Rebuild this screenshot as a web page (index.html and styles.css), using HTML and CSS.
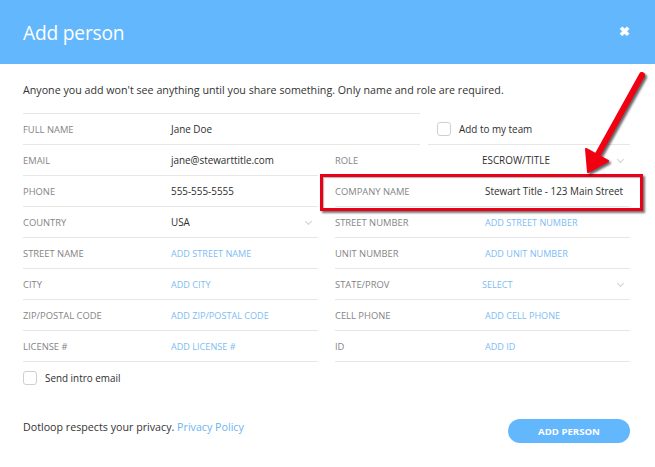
FILE: index.html
```html
<!DOCTYPE html>
<html>
<head>
<meta charset="utf-8">
<link rel="stylesheet" href="styles.css">
</head>
<body>
<div class="modal">
  <header class="head">
    <h1 class="title">Add person</h1>
    <span class="close">&#x2716;</span>
  </header>
  <div class="content">
    <p class="intro">Anyone you add won't see anything until you share something. Only name and role are required.</p>
    <div class="toprow">
      <div class="row fullname">
        <span class="label">FULL NAME</span>
        <span class="value">Jane Doe</span>
      </div>
      <div class="row team">
        <span class="box"></span>
        <span class="value">Add to my team</span>
      </div>
    </div>
    <div class="grid">
      <div class="col">
        <div class="row"><span class="label">EMAIL</span><span class="value">jane@stewarttitle.com</span></div>
        <div class="row"><span class="label">PHONE</span><span class="value">555-555-5555</span></div>
        <div class="row"><span class="label">COUNTRY</span><span class="value">USA</span><span class="chev"></span></div>
        <div class="row"><span class="label">STREET NAME</span><span class="link">ADD STREET NAME</span></div>
        <div class="row"><span class="label">CITY</span><span class="link">ADD CITY</span></div>
        <div class="row"><span class="label">ZIP/POSTAL CODE</span><span class="link">ADD ZIP/POSTAL CODE</span></div>
        <div class="row"><span class="label">LICENSE #</span><span class="link">ADD LICENSE #</span></div>
      </div>
      <div class="col right">
        <div class="row"><span class="label">ROLE</span><span class="value sel">ESCROW/TITLE</span><span class="chev"></span></div>
        <div class="row company"><span class="label">COMPANY NAME</span><span class="value">Stewart Title - 123 Main Street</span><span class="highlight"></span></div>
        <div class="row"><span class="label">STREET NUMBER</span><span class="link">ADD STREET NUMBER</span></div>
        <div class="row"><span class="label">UNIT NUMBER</span><span class="link">ADD UNIT NUMBER</span></div>
        <div class="row"><span class="label">STATE/PROV</span><span class="link sel">SELECT</span><span class="chev"></span></div>
        <div class="row"><span class="label">CELL PHONE</span><span class="link">ADD CELL PHONE</span></div>
        <div class="row"><span class="label">ID</span><span class="link">ADD ID</span></div>
      </div>
    </div>
    <div class="intro-mail">
      <span class="box"></span>
      <span class="value">Send intro email</span>
    </div>
    <footer class="foot">
      <span class="privacy">Dotloop respects your privacy. <span class="plink">Privacy Policy</span></span>
      <span class="btn">ADD PERSON</span>
    </footer>
  </div>
  <svg class="arrow" width="70" height="110" viewBox="580 70 70 110">
    <line x1="642" y1="75" x2="597" y2="156" stroke="#f00010" stroke-width="6" stroke-linecap="round"/>
    <polygon points="588,172 586,149 608,161" fill="#f00010" stroke="#f00010" stroke-width="2" stroke-linejoin="round"/>
  </svg>
</div>
</body>
</html>
```
FILE: styles.css
```css
* { box-sizing: border-box; }
html, body { margin: 0; padding: 0; background: #fff; }
body { font-family: "Open Sans", "Noto Sans", sans-serif; color: #333; }
.modal { position: relative; width: 655px; height: 467px; background: #fff; }
.head {
  height: 64px;
  background: #62b7fd;
  display: flex;
  align-items: center;
  justify-content: space-between;
  padding: 0 23px 0 23px;
}
.title { margin: 0; font-size: 19.2px; font-weight: 400; color: #fff; letter-spacing: -0.2px; }
.close { color: #fff; font-size: 13px; font-weight: 700; margin-right: 2px; margin-top: -2px; }
.content { padding: 0 25px 0 23px; }
.intro { margin: 0; padding-top: 18px; padding-bottom: 15px; font-size: 10.7px; line-height: 16px; color: #333; }
.toprow { display: flex; gap: 8px; }
.row {
  height: 31px;
  display: flex;
  align-items: center;
  border-bottom: 1px solid #e7e7e7;
  position: relative;
}
.fullname { width: 397px; border-top: 1px solid #e7e7e7; height: 32px; }
.team { flex: 1; padding-left: 9px; margin-top: 1px; }
.label { width: 148px; flex: none; font-size: 9.4px; color: #848484; }
.right .label { width: 150px; }
.value { font-size: 9.9px; color: #2e2e2e; white-space: nowrap; }
.link { font-size: 9.1px; color: #7dbcf3; white-space: nowrap; }
.sel { margin-left: -3px; }
.grid { display: grid; grid-template-columns: 295px 295px; column-gap: 17px; }
.chev {
  position: absolute; right: 7px; top: 12px;
  width: 5px; height: 5px;
  border-right: 1px solid #d0d0d0; border-bottom: 1px solid #d0d0d0;
  transform: rotate(45deg);
}
.box {
  width: 14px; height: 14px; flex: none;
  border: 1px solid #cfcfcf; border-radius: 3px;
  margin-right: 8px; background: #fff;
}
.highlight {
  position: absolute; left: -15px; right: -13px; top: -2px; bottom: -5px;
  border: 3px solid #ea0019;
  box-shadow: 2px 2px 2px rgba(0,0,0,0.55), inset 1px 1px 1px rgba(0,0,0,0.3);
}
.intro-mail { display: flex; align-items: center; height: 32px; }
.foot {
  display: flex; align-items: center; justify-content: space-between;
  margin-top: 24px; height: 26px;
}
.privacy { font-size: 10.7px; color: #333; padding-bottom: 8px; }
.plink { color: #6cb4f2; }
.btn {
  width: 122px; height: 24px; border-radius: 12px;
  background: #62b7fd; color: #fff; font-size: 9.6px; font-weight: 700;
  display: flex; align-items: center; justify-content: center;
}
.arrow { position: absolute; left: 580px; top: 70px; filter: drop-shadow(2px 2px 1px rgba(0,0,0,0.6)); overflow: visible; }
```
